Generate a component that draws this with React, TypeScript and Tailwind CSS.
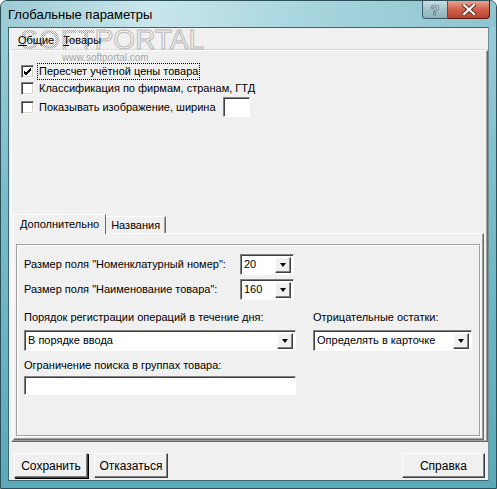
import React from "react";

const ui = "font-['Liberation_Sans',Arial,sans-serif] text-[11px] text-black leading-none";

function Check({ checked, label, focus }: { checked?: boolean; label: string; focus?: boolean }) {
    return (
        <div className="flex items-center h-[17px]">
            <div className="w-[13px] h-[13px] bg-white border border-[#808080] border-r-white border-b-white shadow-[inset_1px_1px_0_#404040,inset_-1px_-1px_0_#d4d0c8] flex items-center justify-center">
                {checked && (
                    <svg width="9" height="9" viewBox="0 0 9 9">
                        <path d="M1 4 L3 6 L8 1 M1 5 L3 7 L8 2 M1 6 L3 8 L8 3" stroke="#000" strokeWidth="1" fill="none" />
                    </svg>
                )}
            </div>
            <span className={`ml-[4px] px-[1px] py-[2px] ${focus ? 'outline outline-1 outline-dotted outline-black' : ''}`}>{label}</span>
        </div>
    )
}

function DropButton() {
    return (
        <div className="w-[16px] h-[16px] bg-[#f0f0f0] border border-white border-r-[#404040] border-b-[#404040] shadow-[inset_-1px_-1px_0_#808080] flex items-center justify-center">
            <div className="w-0 h-0 border-l-[3.5px] border-r-[3.5px] border-t-[4px] border-l-transparent border-r-transparent border-t-black" />
        </div>
    )
}

function Combo({ value, width }: { value: string; width: string }) {
    return (
        <div className={`${width} h-[21px] bg-white border border-[#808080] border-r-white border-b-white shadow-[inset_1px_1px_0_#404040] flex items-center justify-between pl-[3px] pr-[2px]`}>
            <span>{value}</span>
            <DropButton />
        </div>
    )
}

function Button({ label, width, main }: { label: string; width: string; main?: boolean }) {
    return (
        <div className={`${width} h-[25px] bg-[#f0f0f0] flex items-center justify-center border border-white border-r-[#404040] border-b-[#404040] ${main ? 'shadow-[inset_-1px_-1px_0_#808080,1px_1px_0_#000]' : 'shadow-[inset_-1px_-1px_0_#808080]'}`}>
            <span className="text-[12px]">{label}</span>
        </div>
    )
}

export default function App() {
    return (
        <div className={`${ui} w-[497px] h-[489px] flex flex-col bg-[linear-gradient(180deg,#9ccfd9,#7bbccb_40%,#5aa9b9)] rounded-t-[7px] border border-[#2c4f5a] overflow-hidden`}>
            {/* title bar */}
            <div className="h-[26px] flex items-start justify-between bg-[linear-gradient(90deg,#9ccbd4_0%,#c9e6ec_30%,#a9d6df_60%,#8ec5d0_100%)]">
                <div className="pt-[7px] pl-[7px] text-[13px] font-['Liberation_Sans',sans-serif]">Глобальные параметры</div>
                <div className="flex mr-[6px]">
                    <div className="w-[26px] h-[18px] rounded-bl-[4px] border border-t-0 border-[#3b5a66] bg-[linear-gradient(180deg,#c9dde2,#a4c3cb_50%,#8fb2bb)] flex items-center justify-center">
                        <span className="text-white font-bold text-[14px] [-webkit-text-stroke:0.6px_#33434a]">?</span>
                    </div>
                    <div className="w-[42px] h-[18px] rounded-br-[4px] border border-l-0 border-t-0 border-[#5a1a12] bg-[linear-gradient(180deg,#e8a48f,#d2604a_50%,#b8432e)] flex items-center justify-center">
                        <svg width="14" height="11" viewBox="0 0 14 11">
                            <path d="M2 1 L12 10 M12 1 L2 10" stroke="#5a2a20" strokeWidth="4" strokeLinecap="square" />
                            <path d="M2 1 L12 10 M12 1 L2 10" stroke="#fff" strokeWidth="2.2" strokeLinecap="square" />
                        </svg>
                    </div>
                </div>
            </div>

            {/* client */}
            <div className="relative mx-[7px] h-[454px] bg-[#f0f0f0] border border-[#3d6570] border-r-[#6f8f98] flex flex-col">
                {/* watermark */}
                <div className="absolute left-[11px] top-[-2px] flex items-end pointer-events-none">
                    <span className="text-[28px] font-bold text-transparent bg-[conic-gradient(#a8a8a8_25%,transparent_0_50%,#a8a8a8_0_75%,transparent_0)] bg-[length:2px_2px] bg-clip-text font-['Liberation_Sans',sans-serif]">SOFT</span>
                    <span className="text-[28px] text-[#f4f4f4] [-webkit-text-stroke:1px_#b9b9b9] font-['Liberation_Sans',sans-serif]">PORTAL</span>
                </div>
                <div className="absolute left-[53px] top-[25px] text-[10px] text-[#a8a8a8] pointer-events-none">www.softportal.com</div>

                {/* top tabs */}
                <div className="h-[22px] flex items-center gap-[9px] pl-[9px] pt-[2px] relative">
                    <span><span className="underline">О</span>бщие</span>
                    <span><span className="underline">Т</span>овары</span>
                </div>

                {/* outer sheet */}
                <div className="ml-[2px] h-[392px] border border-white border-r-[#696969] border-b-[#696969] shadow-[inset_-1px_-1px_0_#a0a0a0,0_-1px_0_#d8d8d8] flex flex-col">
                    <div className="pt-[12px] pl-[9px] flex flex-col">
                        <Check checked focus label="Пересчет учётной цены товара" />
                        <Check label="Классификация по фирмам, странам, ГТД" />
                        <div className="flex items-center">
                            <Check label="Показывать изображение, ширина" />
                            <div className="ml-[6px] w-[27px] h-[20px] bg-white border border-[#808080] border-r-white border-b-white shadow-[inset_1px_1px_0_#404040]" />
                        </div>
                    </div>

                    {/* inner tabs */}
                    <div className="mt-[97px] ml-[1px] flex items-end h-[19px]">
                        <div className="h-[20px] px-[6px] flex items-center bg-[#f0f0f0] border border-white border-b-0 border-r-[#696969] relative z-10 -mb-[1px]">Дополнительно</div>
                        <div className="h-[17px] px-[5px] flex items-center bg-[#f0f0f0] border border-white border-b-0 border-l-0 border-r-[#696969] shadow-[inset_-1px_0_0_#a0a0a0]">Названия</div>
                    </div>
                    <div className="ml-[1px] mr-[3px] h-[207px] border border-white border-r-[#696969] border-b-[#696969] shadow-[inset_-1px_-1px_0_#a0a0a0] pt-[10px] pl-[2px] pr-[3px]">
                        <div className="h-[192px] border border-[#a0a0a0] shadow-[1px_1px_0_#fff,inset_1px_1px_0_#fff] pl-[7px] pr-[6px] pt-[9px] flex flex-col">
                            <div className="flex items-center h-[21px]">
                                <span className="w-[216px]">Размер поля "Номенклатурный номер":</span>
                                <Combo value="20" width="w-[54px]" />
                            </div>
                            <div className="flex items-center h-[21px] mt-[4px]">
                                <span className="w-[216px]">Размер поля "Наименование товара":</span>
                                <Combo value="160" width="w-[54px]" />
                            </div>
                            <div className="flex mt-[12px]">
                                <div className="flex flex-col w-[289px]">
                                    <span className="h-[12px]">Порядок регистрации операций в течение дня:</span>
                                    <div className="mt-[6px]"><Combo value="В порядке ввода" width="w-[272px]" /></div>
                                    <span className="mt-[9px] h-[12px]">Ограничение поиска в группах товара:</span>
                                    <div className="mt-[4px] w-[272px] h-[19px] bg-white border border-[#808080] border-r-white border-b-white shadow-[inset_1px_1px_0_#404040]" />
                                </div>
                                <div className="flex flex-col">
                                    <span className="h-[12px]">Отрицательные остатки:</span>
                                    <div className="mt-[6px]"><Combo value="Определять в карточке" width="w-[159px]" /></div>
                                </div>
                            </div>
                        </div>
                    </div>
                </div>

                {/* buttons */}
                <div className="mt-[11px] flex pl-[5px] pr-[3px]">
                    <Button main label="Сохранить" width="w-[74px]" />
                    <div className="ml-[6px]"><Button label="Отказаться" width="w-[74px]" /></div>
                    <div className="ml-auto"><Button label="Справка" width="w-[83px]" /></div>
                </div>
            </div>
        </div>
    )
}
